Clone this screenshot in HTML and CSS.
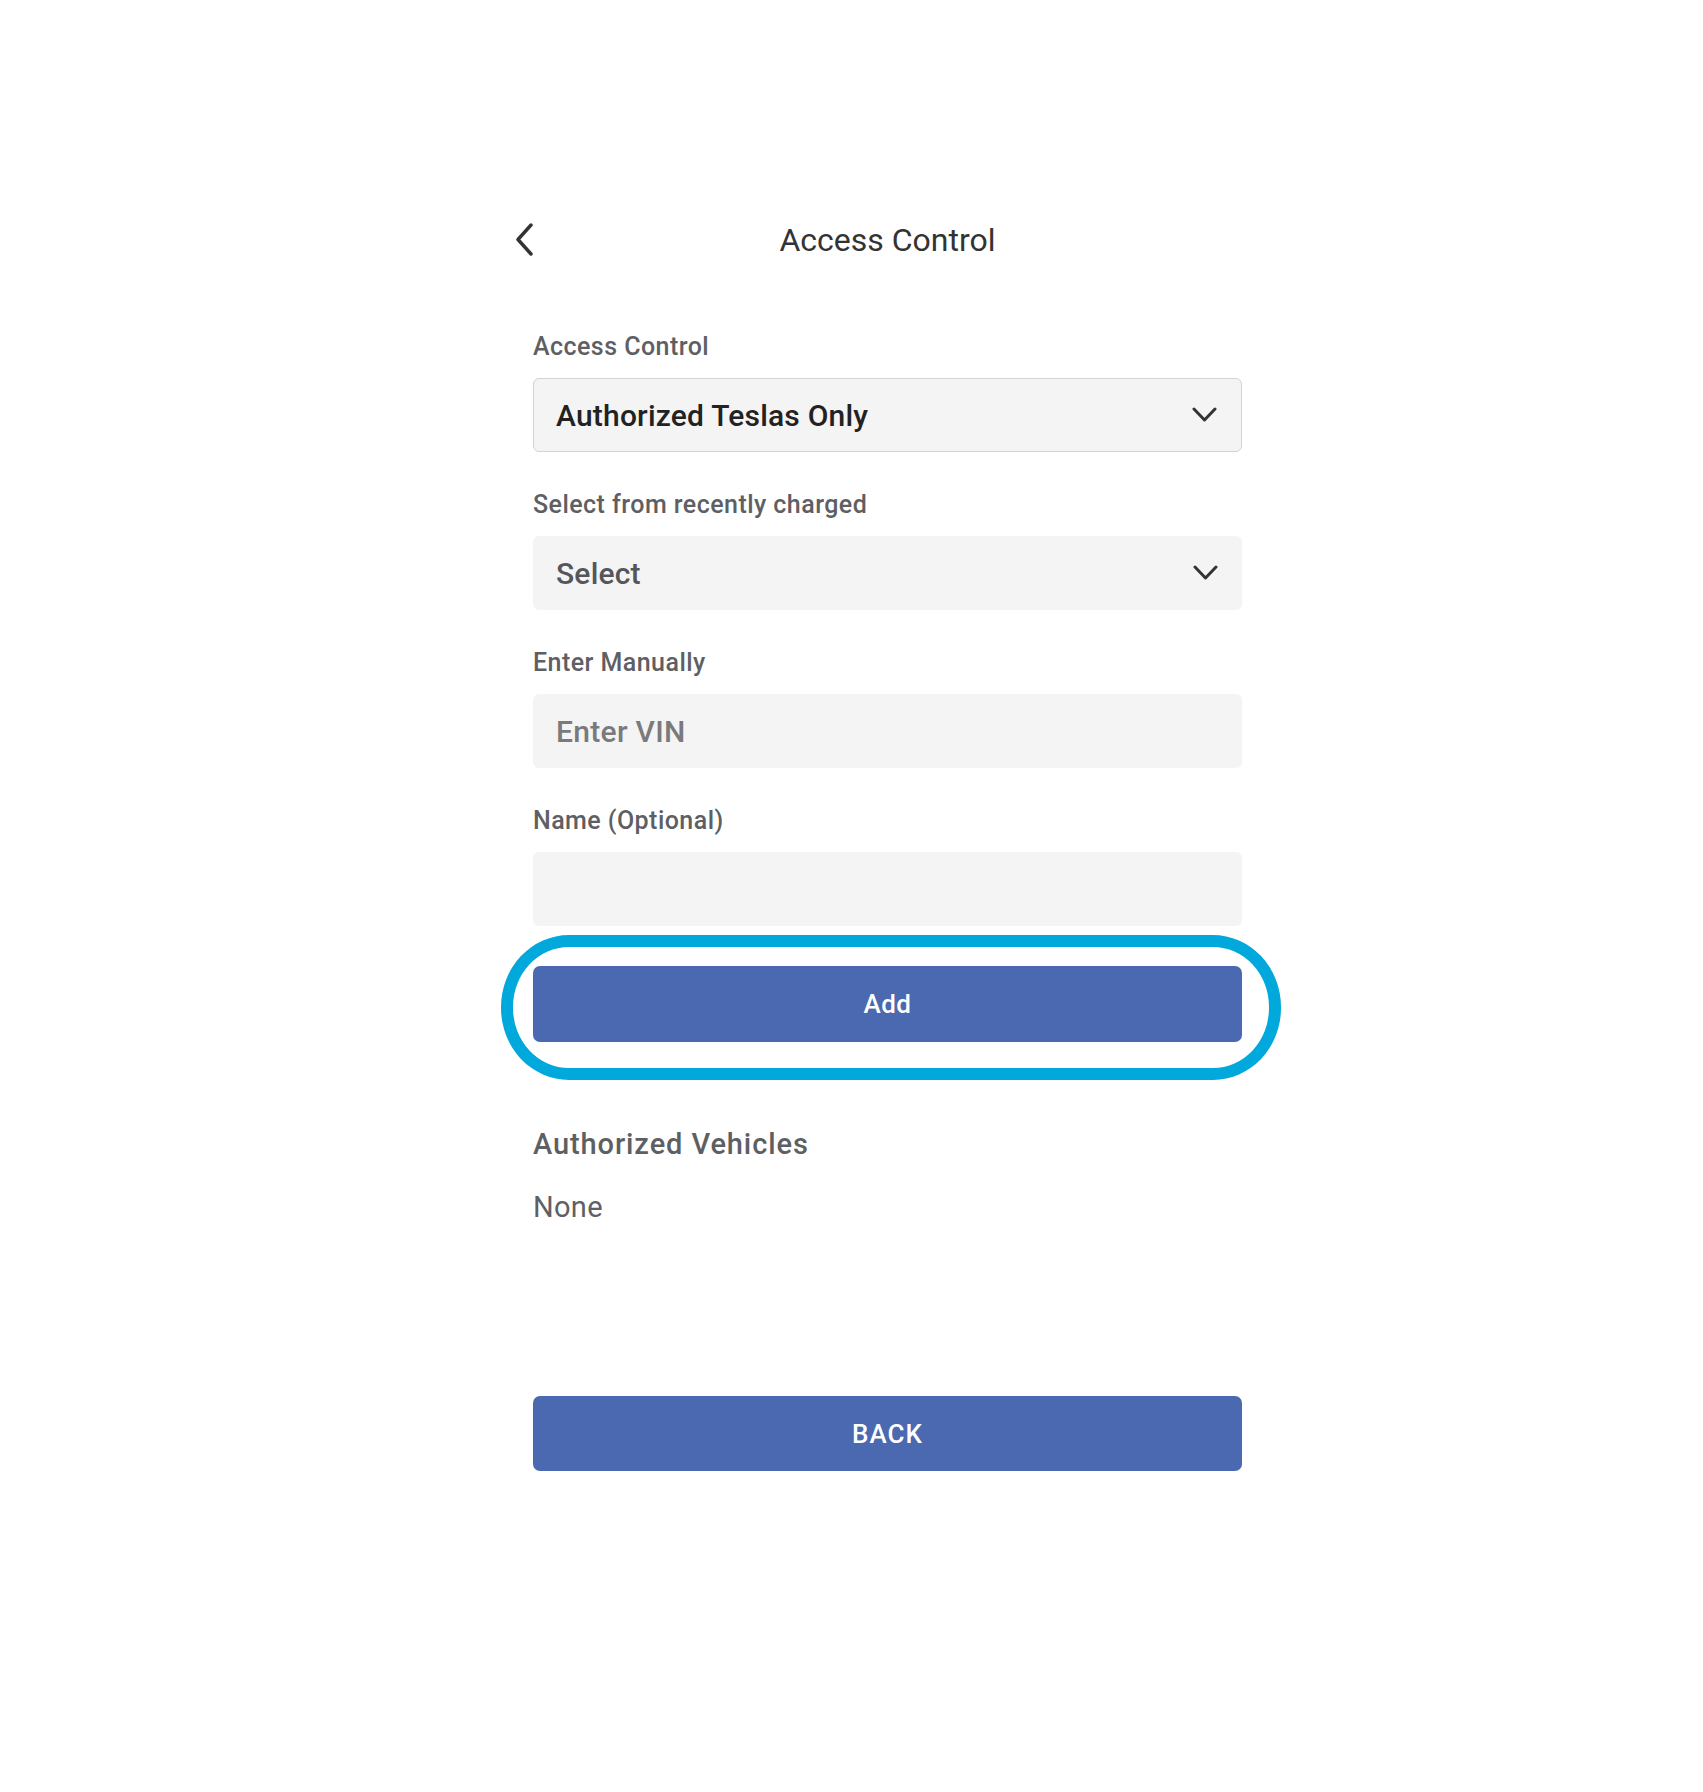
FILE: index.html
```html
<!DOCTYPE html>
<html lang="en">
<head>
  <meta charset="UTF-8" />
  <meta name="viewport" content="width=device-width, initial-scale=1" />
  <title>Access Control</title>
  <link rel="stylesheet" href="styles.css">
</head>
<body>
  <div class="screen">
    <div class="header">
      <a class="back-arrow" href="#">
        <svg width="20" height="34" viewBox="0 0 20 34">
          <path d="M16 2 L3 16.5 L16 31" fill="none" stroke="#333" stroke-width="3.4" stroke-linecap="round" stroke-linejoin="round"/>
        </svg>
      </a>
      <h1>Access Control</h1>
      <span></span>
    </div>

    <div class="form">
      <div class="field">
        <div class="label">Access Control</div>
        <div class="box box-outlined">
          <span class="value">Authorized Teslas Only</span>
          <svg class="caret" width="25" height="16" viewBox="0 0 25 16">
            <path d="M2 2 L12.5 13 L23 2" fill="none" stroke="#333" stroke-width="3" stroke-linecap="round" stroke-linejoin="round"/>
          </svg>
        </div>
      </div>

      <div class="field">
        <div class="label">Select from recently charged</div>
        <div class="box">
          <span class="placeholder-select">Select</span>
          <svg class="caret" width="25" height="16" viewBox="0 0 25 16">
            <path d="M2 2 L12.5 13 L23 2" fill="none" stroke="#333" stroke-width="3" stroke-linecap="round" stroke-linejoin="round"/>
          </svg>
        </div>
      </div>

      <div class="field">
        <div class="label">Enter Manually</div>
        <div class="box">
          <span class="placeholder">Enter VIN</span>
        </div>
      </div>

      <div class="field">
        <div class="label">Name (Optional)</div>
        <div class="box"></div>
      </div>

      <div class="add-wrap">
        <button class="btn">Add</button>
        <div class="highlight"></div>
      </div>

      <h2>Authorized Vehicles</h2>
      <div class="none">None</div>

      <button class="btn btn-back">BACK</button>
    </div>
  </div>
</body>
</html>
```

FILE: styles.css
```css
body {
  font-family: Roboto, "Liberation Sans", sans-serif;
  background: #ffffff;
  margin: 0;
  padding: 0;
}

.screen {
  width: 775px;
  margin-left: 500px;
  padding-top: 210px;
}

.header {
  display: grid;
  grid-template-columns: 1fr auto 1fr;
  align-items: center;
  height: 60px;
}

.back-arrow {
  display: flex;
  align-items: center;
  padding-left: 15px;
}

h1 {
  margin: 0;
  font-size: 32px;
  font-weight: 400;
  line-height: 60px;
  color: #333333;
}

.form {
  padding: 63px 33px 0 33px;
}

.field {
  margin-bottom: 39px;
}

.label {
  font-size: 25px;
  font-weight: 500;
  line-height: 28px;
  letter-spacing: 0.45px;
  color: #5e5f64;
  margin-bottom: 17px;
}

.box {
  height: 74px;
  box-sizing: border-box;
  background: #f4f4f4;
  border-radius: 6px;
  display: flex;
  align-items: center;
  justify-content: space-between;
  padding: 0 24px 0 23px;
}

.box-outlined {
  border: 1.5px solid #d3d3d3;
  padding-left: 22px;
}

.value {
  font-size: 30px;
  font-weight: 500;
  letter-spacing: 0.2px;
  color: #222222;
}

.placeholder-select {
  font-size: 30px;
  font-weight: 500;
  letter-spacing: 0.2px;
  color: #55565a;
}

.placeholder {
  font-size: 30px;
  font-weight: 500;
  letter-spacing: 0.3px;
  color: #7a7a7c;
}

.add-wrap {
  position: relative;
  margin-top: 40px;
}

.btn {
  display: block;
  width: 100%;
  height: 76px;
  border: none;
  border-radius: 7px;
  background: #4a69b1;
  color: #ffffff;
  font-family: Roboto, "Liberation Sans", sans-serif;
  font-size: 26px;
  font-weight: 500;
  letter-spacing: 0.5px;
}

/* annotation ring around the Add button */
.highlight {
  position: absolute;
  left: -32px;
  right: -39px;
  top: -31px;
  bottom: -38px;
  border: 12.5px solid #00a8dc;
  border-radius: 68px / 72px;
  pointer-events: none;
}

h2 {
  margin: 86px 0 0 0;
  font-size: 29px;
  font-weight: 500;
  line-height: 32px;
  letter-spacing: 0.9px;
  color: #5e5f63;
}

.none {
  margin-top: 30px;
  font-size: 29px;
  line-height: 34px;
  letter-spacing: 0.3px;
  color: #5f6064;
}

.btn-back {
  margin-top: 172px;
  height: 75px;
  letter-spacing: 1px;
}
```
